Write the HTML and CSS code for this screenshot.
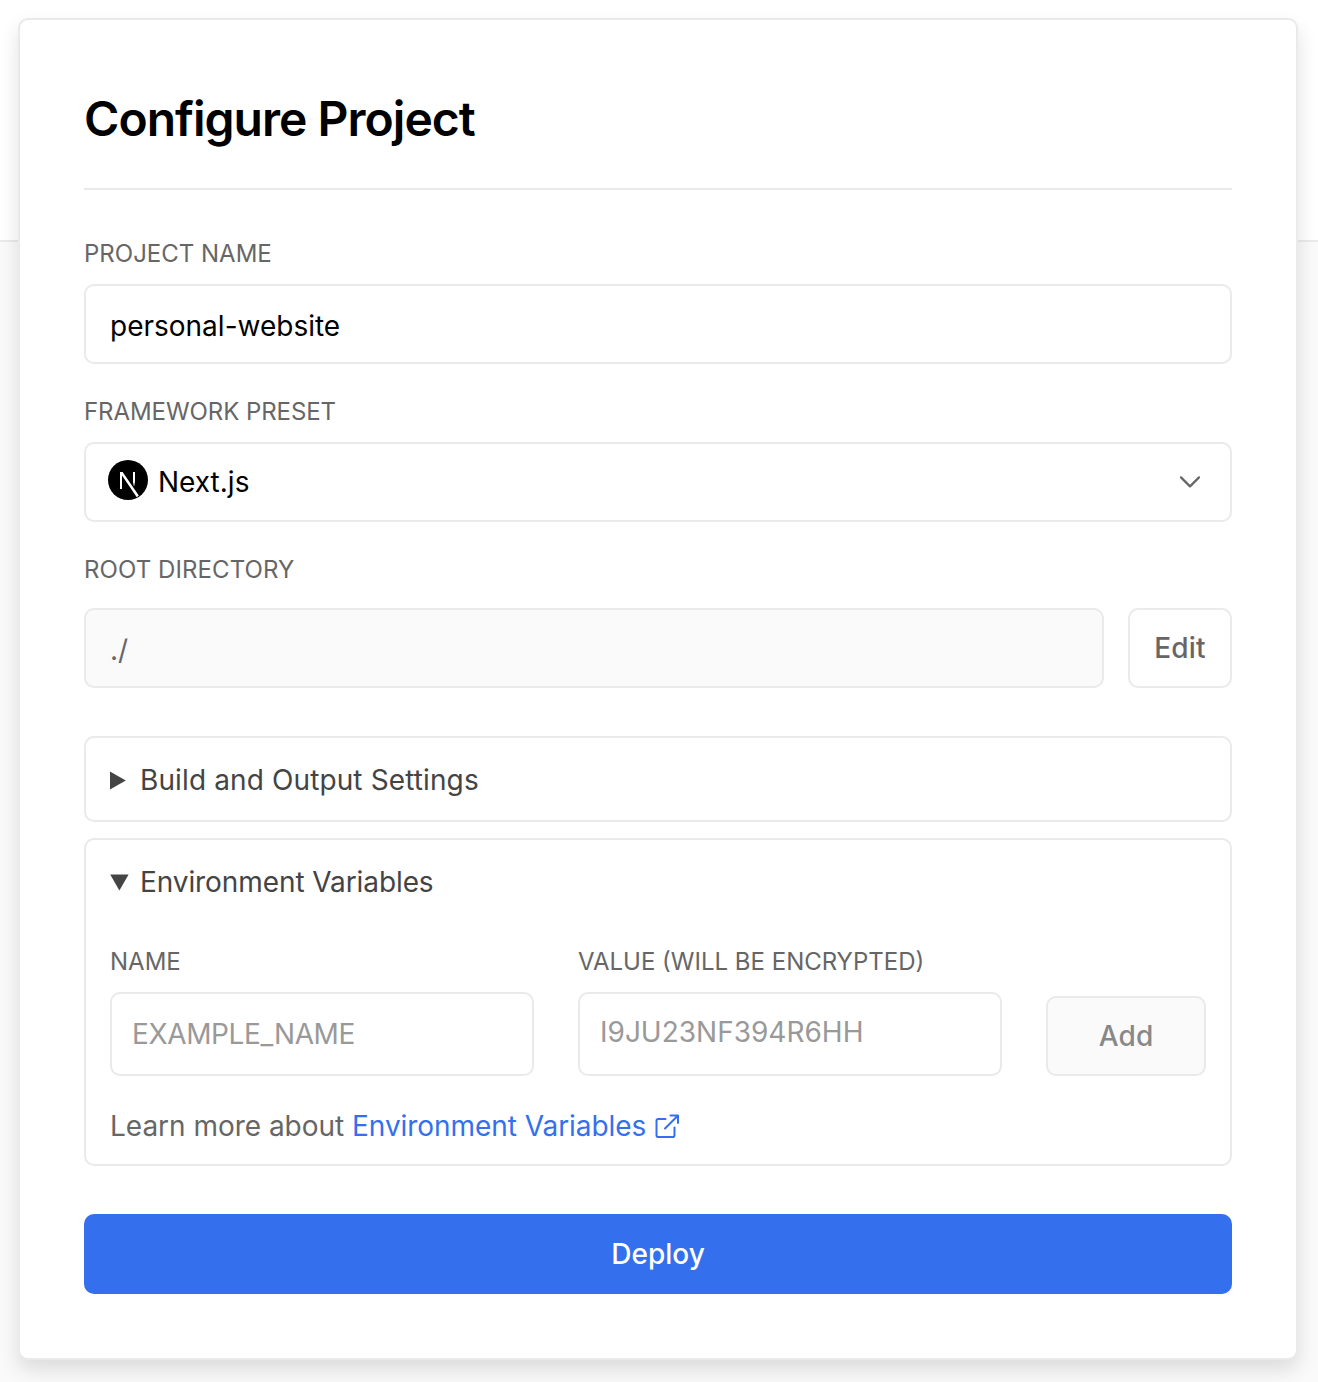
FILE: index.html
```html
<!DOCTYPE html>
<html lang="en">
<head>
<meta charset="utf-8">
<title>Configure Project</title>
<link rel="stylesheet" href="styles.css">
</head>
<body>
<main class="card">
  <h1 class="title">Configure Project</h1>
  <form class="form">
    <label class="label" for="project">PROJECT NAME</label>
    <input class="input input-low" id="project" type="text" value="personal-website">
    <div class="label label-next label-framework">FRAMEWORK PRESET</div>
    <div class="select">
      <svg class="logo" width="40" height="40" viewBox="0 0 40 40" fill="none">
        <defs>
          <clipPath id="disc"><circle cx="20" cy="20" r="20"/></clipPath>
          <linearGradient id="stem" x1="0" y1="12" x2="0" y2="26" gradientUnits="userSpaceOnUse"><stop offset=".7" stop-color="#fff"/><stop offset="1" stop-color="#fff" stop-opacity=".2"/></linearGradient>
        </defs>
        <circle cx="20" cy="20" r="20" fill="#000"/>
        <g clip-path="url(#disc)">
          <path d="M12 29V12h2.600l16.200 23.500-2 1.700L14 15.600V29z" fill="#fff"/>
          <path d="M25 12h2v14h-2z" fill="url(#stem)"/>
        </g>
      </svg>
      <span class="select-text">Next.js</span>
      <svg class="chevron" width="24" height="16" viewBox="0 0 24 16" fill="none" stroke="#666" stroke-width="2.2" stroke-linecap="round" stroke-linejoin="round"><path d="M3 3.400l9 9 9-9"/></svg>
    </div>
    <label class="label label-next label-root" for="root">ROOT DIRECTORY</label>
    <div class="root-row">
      <input class="input input-low input-muted" id="root" type="text" value="./" readonly>
      <button class="button" type="button">Edit</button>
    </div>
    <section class="panel">
      <div class="summary summary-build">
        <svg class="marker" width="20" height="20" viewBox="0 0 20 20" fill="#444"><path d="M0 1.5v18L15.8 10.5z"/></svg>
        <span>Build and Output Settings</span>
      </div>
    </section>
    <section class="panel panel-env">
      <div class="summary">
        <svg class="marker" width="20" height="20" viewBox="0 0 20 20" fill="#444"><path d="M.2 2.4h18.4L9.4 18.6z"/></svg>
        <span>Environment Variables</span>
      </div>
      <div class="env-row">
        <div class="env-field">
          <label class="label" for="name">NAME</label>
          <input class="input env-input env-name" id="name" type="text" placeholder="EXAMPLE_NAME">
        </div>
        <div class="env-field">
          <label class="label" for="value">VALUE (WILL BE ENCRYPTED)</label>
          <input class="input env-input env-value" id="value" type="text" placeholder="I9JU23NF394R6HH">
        </div>
        <button class="button button-add" type="button">Add</button>
      </div>
      <p class="learn">Learn more about <a class="link" href="#">Environment Variables<svg class="external" width="26" height="26" viewBox="0 0 26 26" fill="none" stroke="currentColor" stroke-width="2" stroke-linecap="round" stroke-linejoin="round"><path d="M20.500 14.500v7.700a1.800 1.800 0 0 1-1.800 1.800H4.300A1.800 1.800 0 0 1 2.500 22.200V7.800A1.800 1.800 0 0 1 4.300 6H11.500M16.500 2.500h7.500v7.500M11 15.500L24 2.500"/></svg></a></p>
    </section>
    <button class="deploy" type="button">Deploy</button>
  </form>
</main>
</body>
</html>
```
FILE: styles.css
```css
* {
  box-sizing: border-box;
}

body {
  margin: 0;
  height: 1382px;
  padding: 18px 20px 0 18px;
  overflow: hidden;
  background: linear-gradient(#fff 240px, #eaeaea 240px, #eaeaea 242px, #fafafa 242px);
  font-family: Inter, "Liberation Sans", sans-serif;
  font-size: 28px;
  color: #000;
}

.card {
  height: 1342px;
  padding: 64px;
  border: 2px solid #eaeaea;
  border-radius: 10px;
  background: #fff;
  box-shadow: 0 10px 20px rgba(0, 0, 0, 0.12);
}

.title {
  height: 106px;
  margin: 0;
  border-bottom: 2px solid #eaeaea;
  font-size: 48px;
  font-weight: 600;
  line-height: 69px;
  letter-spacing: -0.98px;
}

.form {
  display: flex;
  flex-direction: column;
  padding-top: 46px;
}

.label {
  display: block;
  margin-bottom: 12px;
  color: #666;
  font-size: 24px;
  line-height: 36px;
}

.label-next {
  margin-top: 30px;
}

.label-framework {
  letter-spacing: -0.07px;
}

.label-root {
  letter-spacing: 0.08px;
}

.input {
  width: 100%;
  height: 80px;
  padding: 0 24px;
  border: 2px solid #eaeaea;
  border-radius: 10px;
  background: #fff;
  color: #000;
  font: inherit;
  outline: none;
}

.input-low {
  padding-top: 4px;
}

.input-muted {
  background: #fafafa;
  color: #666;
}

.input::placeholder {
  color: #999;
  opacity: 1;
}

.select {
  display: flex;
  align-items: center;
  height: 80px;
  padding: 0 28px 0 22px;
  border: 2px solid #eaeaea;
  border-radius: 10px;
}

.logo {
  margin: 0 10px 4px 0;
}

.chevron {
  margin-left: auto;
}

.root-row {
  display: flex;
  gap: 24px;
  margin-top: 8px;
}

.button {
  flex: none;
  width: 104px;
  height: 80px;
  padding: 0;
  border: 2px solid #eaeaea;
  border-radius: 10px;
  background: #fff;
  color: #666;
  font: inherit;
  font-weight: 500;
  letter-spacing: 0.15px;
}

.button-add {
  width: 160px;
  background: #fafafa;
  color: #888;
}

.panel {
  height: 86px;
  margin-top: 48px;
  padding: 0 24px;
  border: 2px solid #eaeaea;
  border-radius: 10px;
}

.panel-env {
  height: 328px;
  margin-top: 16px;
}

.summary {
  display: flex;
  align-items: center;
  gap: 10px;
  height: 84px;
  color: #444;
  letter-spacing: -0.09px;
}

.summary-build {
  letter-spacing: 0.12px;
}

.env-row {
  display: flex;
  align-items: flex-end;
  gap: 44px;
  margin-top: 20px;
}

.env-field {
  flex: 1;
}

.env-input {
  display: block;
  height: 84px;
  padding: 0 20px;
}

.env-name {
  letter-spacing: -0.36px;
}

.env-value {
  padding-bottom: 4px;
}

.learn {
  margin: 29px 0 0;
  color: #666;
  line-height: 42px;
  letter-spacing: -0.02px;
}

.link {
  color: #3470ed;
  letter-spacing: -0.06px;
  text-decoration: none;
}

.external {
  margin-left: 8px;
  vertical-align: -3px;
}

.deploy {
  height: 80px;
  margin-top: 48px;
  border: 0;
  border-radius: 10px;
  background: #3470ed;
  color: #fff;
  font: inherit;
  font-weight: 500;
}
```
